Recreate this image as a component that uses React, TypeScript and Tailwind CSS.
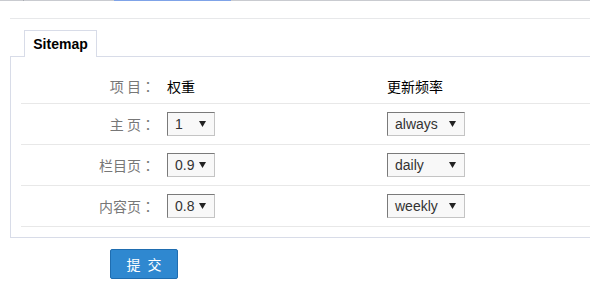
const rows = [
  { label: "主 页", weight: "1", freq: "always" },
  { label: "栏目页", weight: "0.9", freq: "daily" },
  { label: "内容页", weight: "0.8", freq: "weekly" },
];

const FakeSelect = ({ value, width }: { value: string; width: string }) => (
  <div
    className={`${width} h-[24px] flex items-center justify-between pl-[7px] pr-[8px] bg-[#f8f8f8] border border-t-[#7a7a7a] border-l-[#7a7a7a] border-r-[#c4c4c4] border-b-[#c4c4c4] text-[14px] text-[#333] font-['Liberation_Sans',sans-serif]`}
  >
    <span>{value}</span>
    <svg width="7" height="6" viewBox="0 0 7 6">
      <path d="M0 0 L7 0 L3.5 6 Z" fill="#222" />
    </svg>
  </div>
);

// colon centred in its em box, like the reference
const Colon = () => <span className="font-['Noto_Sans_CJK_TC',sans-serif]">：</span>;

export default function App() {
  return (
    <div className="w-[590px] h-[304px] bg-white overflow-hidden font-['Liberation_Sans','Noto_Sans_CJK_SC',sans-serif]">
      {/* top strip */}
      <div className="flex h-px bg-[#c9cbd0]">
        <div className="w-[23px]" />
        <div className="w-px bg-[#a9acb2]" />
        <div className="w-[90px]" />
        <div className="w-[117px] bg-[#7fa3e8]" />
      </div>

      <div className="ml-[10px] mt-[17px] h-px bg-[#e7e8ea]" />

      {/* tab */}
      <div className="mt-[11px] ml-[24px] w-[73px] h-[27px] border border-b-0 border-[#d8dce8] bg-white relative z-10 mb-[-1px] flex items-center justify-center pt-[1px]">
        <span className="text-[14px] font-bold text-black">Sitemap</span>
      </div>

      {/* panel */}
      <div className="ml-[10px] border border-r-0 border-[#d8dce8] pl-[10px] pb-[10px]">
        <div className="flex h-[47px] items-center pt-[12px] border-b border-[#e8e8e8] text-[14px] font-['Noto_Sans_CJK_SC',sans-serif]">
          <div className="w-[134px] text-right text-[#777]">
            项 目<Colon />
          </div>
          <div className="ml-[12px] w-[220px] text-black">权重</div>
          <div className="text-black">更新频率</div>
        </div>
        {rows.map((r) => (
          <div key={r.label} className="flex h-[41px] items-center border-b border-[#e8e8e8]">
            <div className="w-[134px] text-right text-[14px] text-[#777] font-['Noto_Sans_CJK_SC',sans-serif]">
              {r.label}
              <Colon />
            </div>
            <div className="ml-[12px] w-[220px]">
              <FakeSelect value={r.weight} width="w-[48px]" />
            </div>
            <FakeSelect value={r.freq} width="w-[78px]" />
          </div>
        ))}
      </div>

      {/* submit */}
      <button className="ml-[110px] mt-[11px] w-[68px] h-[30px] rounded-[2px] bg-[#2f88d0] border border-[#1f6db0] text-white text-[14px] tracking-[2px] pl-[2px] font-['Noto_Sans_CJK_SC',sans-serif]">
        提 交
      </button>
    </div>
  );
}
